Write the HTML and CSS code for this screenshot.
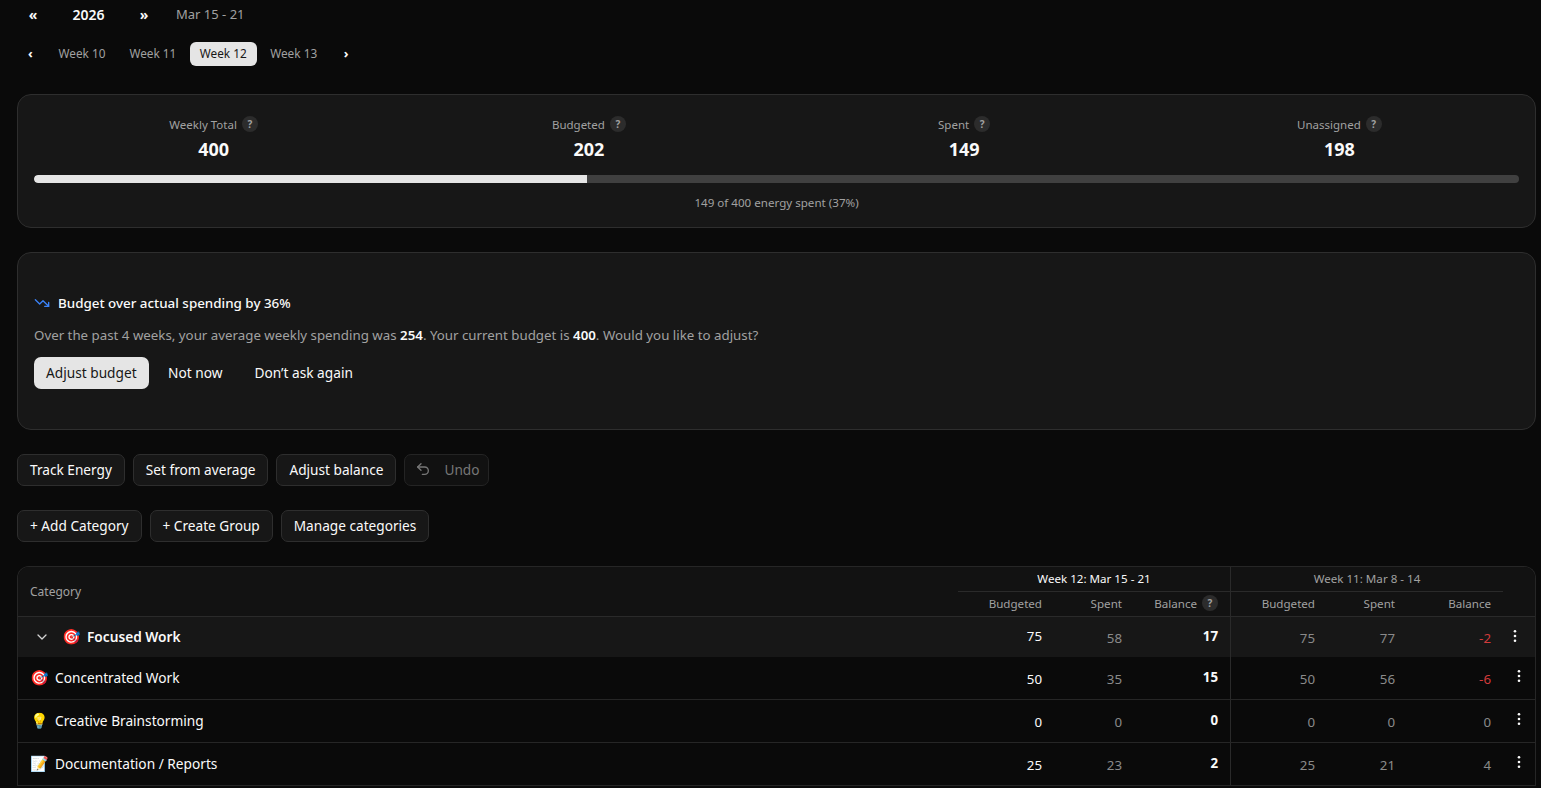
FILE: index.html
```html
<!DOCTYPE html>
<html lang="en">
<head>
<meta charset="utf-8">
<title>Energy Budget</title>
<link rel="stylesheet" href="styles.css">
</head>
<body>
<main class="page">
  <nav class="year-nav">
    <button class="nav-arrow year-arrow">«</button>
    <span class="year">2026</span>
    <button class="nav-arrow year-arrow">»</button>
    <span class="range">Mar 15 - 21</span>
  </nav>
  <nav class="week-nav">
    <button class="nav-arrow week-arrow">‹</button>
    <button class="week">Week 10</button>
    <button class="week">Week 11</button>
    <button class="week active">Week 12</button>
    <button class="week">Week 13</button>
    <button class="nav-arrow week-arrow">›</button>
  </nav>

  <section class="card summary">
    <div class="stats">
      <div class="stat"><div class="stat-label">Weekly Total <span class="help">?</span></div><div class="stat-value">400</div></div>
      <div class="stat"><div class="stat-label">Budgeted <span class="help">?</span></div><div class="stat-value">202</div></div>
      <div class="stat"><div class="stat-label">Spent <span class="help">?</span></div><div class="stat-value">149</div></div>
      <div class="stat"><div class="stat-label">Unassigned <span class="help">?</span></div><div class="stat-value">198</div></div>
    </div>
    <div class="bar"><div class="bar-fill" style="width:37.25%"></div></div>
    <p class="bar-note">149 of 400 energy spent (37%)</p>
  </section>

  <section class="card notice">
    <h2 class="notice-title">
      <svg class="trend" viewBox="0 0 24 24" width="16" height="16" fill="none" stroke="#3b82f6" stroke-width="2" stroke-linecap="round" stroke-linejoin="round"><path d="M16 17h6v-6"/><path d="m22 17-8.500-8.500-5 5L2 7"/></svg>
      Budget over actual spending by 36%
    </h2>
    <p class="notice-text">Over the past 4 weeks, your average weekly spending was <b>254</b>. Your current budget is <b>400</b>. Would you like to adjust?</p>
    <div class="notice-actions">
      <button class="btn-primary">Adjust budget</button>
      <button class="btn-ghost">Not now</button>
      <button class="btn-ghost">Don’t ask again</button>
    </div>
  </section>

  <div class="toolbar">
    <button class="btn">Track Energy</button>
    <button class="btn">Set from average</button>
    <button class="btn">Adjust balance</button>
    <button class="btn disabled"><svg viewBox="0 0 24 24" width="16" height="16" fill="none" stroke="currentColor" stroke-width="2" stroke-linecap="round" stroke-linejoin="round"><path d="M9 14 4 9l5-5"/><path d="M4 9h10.500a5.500 5.500 0 0 1 0 11H11"/></svg>Undo</button>
  </div>
  <div class="toolbar">
    <button class="btn">+ Add Category</button>
    <button class="btn">+ Create Group</button>
    <button class="btn">Manage categories</button>
  </div>

  <section class="table">
    <div class="thead">
      <div class="th-category">Category</div>
      <div class="th-group current-group">
        <div class="group-title current">Week 12: Mar 15 - 21</div>
        <div class="group-cols">
          <span>Budgeted</span><span>Spent</span><span>Balance <span class="help">?</span></span>
        </div>
      </div>
      <div class="th-group">
        <div class="group-title">Week 11: Mar 8 - 14</div>
        <div class="group-cols">
          <span>Budgeted</span><span>Spent</span><span>Balance</span>
        </div>
      </div>
    </div>

    <div class="row group-row">
      <div class="name group-name"><svg class="chev" viewBox="0 0 12 12" width="12" height="12" fill="none" stroke="currentColor" stroke-width="1.300" stroke-linecap="round" stroke-linejoin="round"><path d="M2 4l4 4 4-4"/></svg><span class="emoji group-emoji">🎯</span>Focused Work</div>
      <div class="num strong-num up">75</div><div class="num muted">58</div><div class="num bold sep">17</div>
      <div class="num muted">75</div><div class="num muted">77</div><div class="num neg">-2</div>
      <div class="kebab group-kebab"><svg viewBox="0 0 4 14" width="4" height="14" fill="currentColor"><circle cx="2" cy="2.300" r="1.300"/><circle cx="2" cy="7" r="1.300"/><circle cx="2" cy="11.700" r="1.300"/></svg></div>
    </div>
    <div class="row">
      <div class="name"><span class="emoji">🎯</span>Concentrated Work</div>
      <div class="num strong-num">50</div><div class="num muted">35</div><div class="num bold sep">15</div>
      <div class="num muted">50</div><div class="num muted">56</div><div class="num neg">-6</div>
      <div class="kebab"><svg viewBox="0 0 4 14" width="4" height="14" fill="currentColor"><circle cx="2" cy="2.300" r="1.300"/><circle cx="2" cy="7" r="1.300"/><circle cx="2" cy="11.700" r="1.300"/></svg></div>
    </div>
    <div class="row">
      <div class="name"><span class="emoji">💡</span>Creative Brainstorming</div>
      <div class="num strong-num">0</div><div class="num muted">0</div><div class="num bold sep">0</div>
      <div class="num muted">0</div><div class="num muted">0</div><div class="num muted">0</div>
      <div class="kebab"><svg viewBox="0 0 4 14" width="4" height="14" fill="currentColor"><circle cx="2" cy="2.300" r="1.300"/><circle cx="2" cy="7" r="1.300"/><circle cx="2" cy="11.700" r="1.300"/></svg></div>
    </div>
    <div class="row">
      <div class="name"><span class="emoji">📝</span>Documentation / Reports</div>
      <div class="num strong-num">25</div><div class="num muted">23</div><div class="num bold sep">2</div>
      <div class="num muted">25</div><div class="num muted">21</div><div class="num muted">4</div>
      <div class="kebab"><svg viewBox="0 0 4 14" width="4" height="14" fill="currentColor"><circle cx="2" cy="2.300" r="1.300"/><circle cx="2" cy="7" r="1.300"/><circle cx="2" cy="11.700" r="1.300"/></svg></div>
    </div>
  </section>
</main>
</body>
</html>
```

FILE: styles.css
```css
* { box-sizing: border-box; }
html, body { height: 100%; }
body {
  margin: 0;
  background: #0a0a0a;
  color: #fafafa;
  font-family: "Noto Sans", "Open Sans", sans-serif;
  overflow: hidden;
}
button { font: inherit; color: inherit; background: none; border: 0; padding: 0; }
p, h2 { margin: 0; }
.page { padding: 0 5px 0 17px; }

.year-nav { display: flex; align-items: center; height: 28px; }
.nav-arrow { color: #fafafa; font-weight: 700; }
.year-arrow { width: 32px; font-size: 14px; }
.year { width: 79px; text-align: center; font-size: 14px; font-weight: 600; }
.range { padding-left: 16px; font-size: 13px; color: #a1a1a1; }

.week-nav { display: flex; align-items: center; height: 24px; margin-top: 14px; margin-left: 5px; }
.week-arrow { width: 18px; font-size: 13px; text-align: left; padding-left: 6px; padding-bottom: 2px; }
.week-arrow:first-child { margin-right: 9px; }
.week-arrow:last-child { margin-left: 7px; }
.week { height: 24px; padding: 0 9.500px 2px; margin-right: 4px; font-size: 11.800px; color: #a1a1a1; border-radius: 6px; }
.week:nth-child(2) { margin-right: 5px; }
.week.active { padding: 0 10px 2px; background: #e5e5e5; color: #171717; }

.card { background: #171717; border: 1px solid #2e2e2e; border-radius: 14px; }
.summary { margin-top: 28px; height: 134px; padding: 16px 16px 0; }
.stats { display: grid; grid-template-columns: repeat(4, 1fr); gap: 16px; }
.stat { text-align: center; }
.stat-label { display: flex; justify-content: center; align-items: center; gap: 5px; height: 26px; font-size: 11.500px; color: #a1a1a1; }
.help { display: inline-flex; align-items: center; justify-content: center; width: 16px; height: 16px; border-radius: 50%; background: #2c2c2c; color: #a1a1a1; font-size: 10px; font-weight: 700; }
.stat-value { font-size: 18px; line-height: 24px; font-weight: 700; color: #fafafa; }
.bar { margin-top: 14px; height: 8px; border-radius: 4px; background: #404040; overflow: hidden; }
.bar-fill { height: 100%; background: #e5e5e5; border-radius: 4px 0 0 4px; }
.bar-note { margin-top: 12px; text-align: center; font-size: 11.600px; line-height: 16px; color: #a1a1a1; }

.notice { margin-top: 24px; height: 178px; padding: 39px 16px 0; }
.notice-title { display: flex; align-items: center; gap: 8px; height: 22px; font-size: 13.400px; font-weight: 500; color: #fafafa; }
.trend { flex: none; }
.notice-text { margin-top: 11px; font-size: 13.300px; line-height: 20px; color: #a1a1a1; }
.notice-text b { color: #fafafa; font-weight: 600; }
.notice-actions { display: flex; align-items: center; gap: 7px; margin-top: 12px; }
.btn-primary { height: 32px; padding: 0 12px 2px; background: #e5e5e5; color: #171717; border-radius: 7px; font-size: 13.700px; }
.btn-ghost { height: 32px; padding: 0 12.500px 2px; font-size: 13.700px; color: #fafafa; }

.toolbar { display: flex; gap: 8px; margin-top: 24px; }
.btn { display: inline-flex; align-items: center; height: 32px; padding: 0 12px 2px; background: #171717; border: 1px solid #2e2e2e; border-radius: 7px; font-size: 13.650px; color: #fafafa; }
.btn.disabled { padding: 0 9px 2px 10px; color: #777; background: #111; border-color: #242424; gap: 13px; }

.table { margin-top: 24px; border: 1px solid #262626; border-bottom: 0; border-radius: 12px 12px 0 0; overflow: hidden; }
.thead { display: grid; grid-template-columns: 1fr 273px 304px; height: 50px; background: #121212; border-bottom: 1px solid #2a2a2a; }
.th-category { align-self: center; padding-left: 12px; font-size: 12px; color: #a1a1a1; }
.th-group { padding-right: 32px; }
.current-group { padding-right: 0; border-right: 1px solid #2a2a2a; }
.group-title { height: 25px; padding-bottom: 2px; line-height: 23px; text-align: center; font-size: 11.600px; color: #a1a1a1; border-bottom: 1px solid #2a2a2a; }
.group-title.current { color: #fafafa; }
.group-cols { display: grid; grid-template-columns: 96px 80px 96px; height: 24px; font-size: 11.600px; color: #a1a1a1; }
.group-cols > span { display: flex; align-items: center; justify-content: flex-end; gap: 5px; padding: 0 12px 2px 0; }

.row { display: grid; grid-template-columns: 1fr 96px 80px 97px 96px 80px 96px 32px; height: 43px; background: #0a0a0a; border-bottom: 1px solid #262626; align-items: center; }
.group-row { height: 40px; background: #171717; border-bottom: 0; }
.name { display: flex; align-items: center; height: 100%; padding: 0 0 1px 12px; font-size: 13.700px; color: #fafafa; }
.group-name { font-weight: 600; padding-left: 18px; }
.chev { color: #d4d4d4; margin-right: 14px; }
.emoji { width: 25px; font-size: 15px; font-family: "Noto Color Emoji", sans-serif; font-weight: 400; }
.num { display: flex; align-items: center; justify-content: flex-end; height: 100%; padding: 2px 12px 0 0; font-size: 13.300px; }
.strong-num { color: #fafafa; }
.muted { color: #8a8a8a; }
.bold { color: #fafafa; font-weight: 700; padding: 0 12px 2px 0; }
.neg { color: #d13b3b; }
.sep { border-right: 1px solid #2a2a2a; }
.up { padding: 0 12px 2px 0; }
.kebab { display: flex; align-items: center; justify-content: center; height: 100%; padding-bottom: 4px; color: #fafafa; }
.group-kebab { justify-content: flex-start; padding: 0 0 2px 10px; }
```
